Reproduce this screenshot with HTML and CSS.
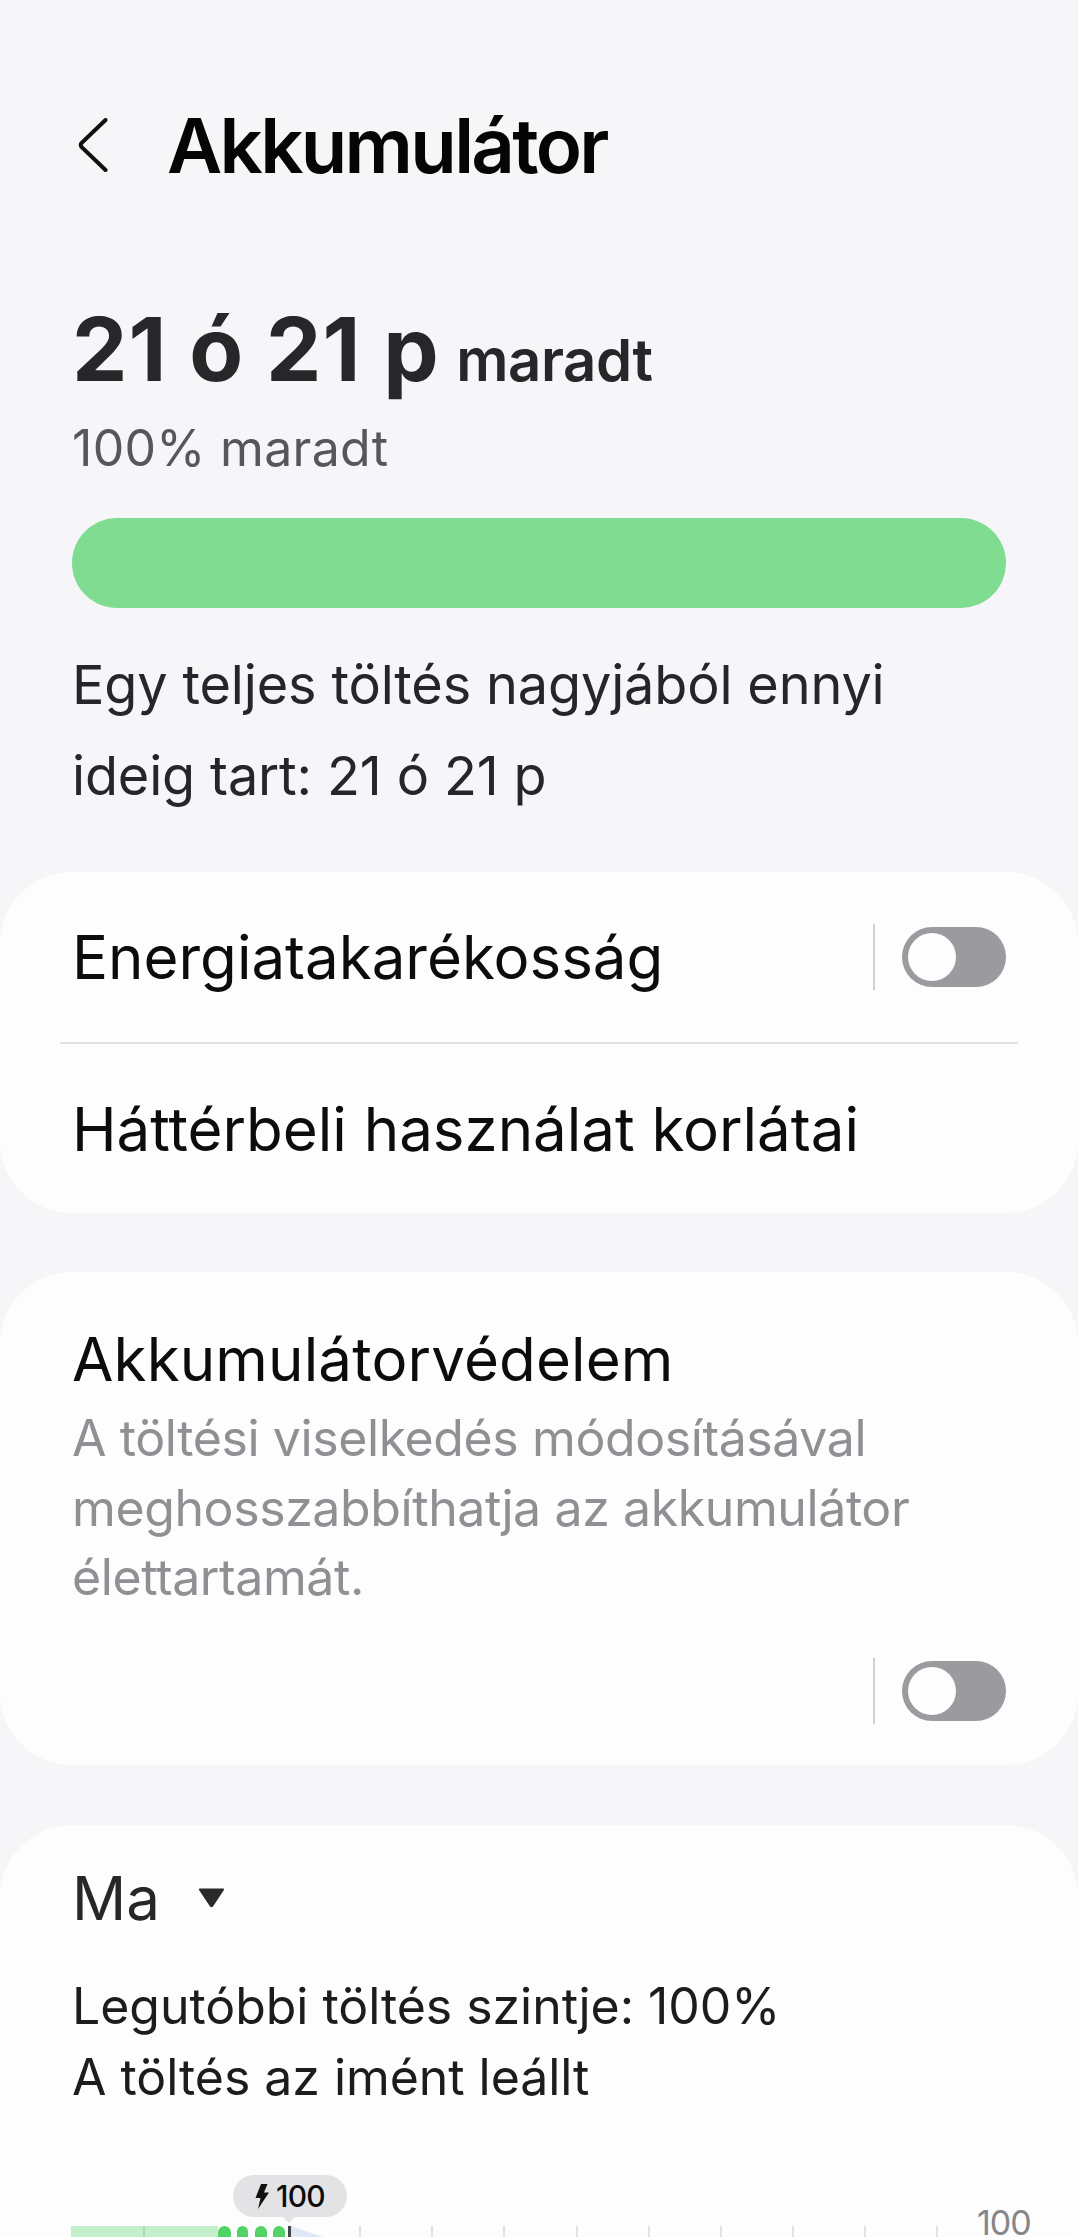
FILE: index.html
```html
<!DOCTYPE html>
<html lang="hu">
<head>
    <meta charset="UTF-8">
    <meta name="viewport" content="width=device-width, initial-scale=1.0">
    <title>Akkumulátor</title>
    <link rel="stylesheet" href="styles.css">
</head>
<body>

    <div class="page">
        <div class="header">
            <svg class="back-icon" width="30" height="54" viewBox="0 0 30 54">
                <path d="M27.5 2 L3.5 25 Q2 27 3.5 29 L27.5 52" fill="none" stroke="#111" stroke-width="4" stroke-linecap="round"/>
            </svg>
            <h1>Akkumulátor</h1>
        </div>

        <div class="summary">
            <div class="time-left"><span class="time-big">21 ó 21 p</span> <span class="time-word">maradt</span></div>
            <div class="percent-left">100% maradt</div>
            <div class="level-bar"></div>
            <p class="full-charge">Egy teljes töltés nagyjából ennyi<br>ideig tart: 21 ó 21 p</p>
        </div>

        <div class="card card-settings">
            <div class="row row-switch">
                <span class="row-title">Energiatakarékosság</span>
                <div class="switch-wrap">
                    <div class="switch"><div class="thumb"></div></div>
                </div>
            </div>
            <div class="divider"></div>
            <div class="row">
                <span class="row-title">Háttérbeli használat korlátai</span>
            </div>
        </div>

        <div class="card card-protect">
            <div class="row-title">Akkumulátorvédelem</div>
            <div class="row-desc">A töltési viselkedés módosításával meghosszabbíthatja az akkumulátor élettartamát.</div>
            <div class="switch-line">
                <div class="switch-wrap">
                    <div class="switch"><div class="thumb"></div></div>
                </div>
            </div>
        </div>

        <div class="card card-usage">
            <div class="period">
                <span>Ma</span>
                <svg width="27" height="20" viewBox="0 0 27 20">
                    <path d="M2 0.5 H25 Q27 0.5 25.6 2.6 L15 18.5 Q13.5 20 12 18.5 L1.4 2.6 Q0 0.5 2 0.5 Z" fill="#2a2a2d"/>
                </svg>
            </div>
            <p class="last-charge">Legutóbbi töltés szintje: 100%<br>A töltés az imént leállt</p>

            <div class="chart">
                <div class="charge-pill">
                    <svg width="14" height="25" viewBox="0 0 14 25">
                        <path d="M6 0 H12.5 L9 8.5 H14 L3 25 L5.5 14 H0.5 Z" fill="#111"/>
                    </svg>
                    <span>100</span>
                </div>
                <svg class="chart-bars" width="1078" height="12" viewBox="0 0 1078 12">
                    <rect x="71" y="0" width="147" height="12" fill="#c3efca"/>
                    <rect x="143" y="0" width="2" height="12" fill="#b0d8b8"/>
                    <rect x="218" y="0" width="13" height="16" rx="6.5" fill="#52d365"/>
                    <rect x="237" y="0" width="11" height="16" rx="5.5" fill="#52d365"/>
                    <rect x="255" y="0" width="12" height="16" rx="6" fill="#52d365"/>
                    <rect x="273" y="0" width="12" height="16" rx="6" fill="#52d365"/>
                    <polygon points="291,0 326,12 291,12" fill="#dfe8f6"/>
                    <rect x="288" y="0" width="3" height="12" fill="#45454a"/>
                    <rect x="359" y="0" width="2" height="12" fill="#e2e2e4"/>
                    <rect x="431" y="0" width="2" height="12" fill="#e2e2e4"/>
                    <rect x="503" y="0" width="2" height="12" fill="#e2e2e4"/>
                    <rect x="576" y="0" width="2" height="12" fill="#e2e2e4"/>
                    <rect x="648" y="0" width="2" height="12" fill="#e2e2e4"/>
                    <rect x="720" y="0" width="2" height="12" fill="#e2e2e4"/>
                    <rect x="792" y="0" width="2" height="12" fill="#e2e2e4"/>
                    <rect x="864" y="0" width="2" height="12" fill="#e2e2e4"/>
                    <rect x="936" y="0" width="2" height="12" fill="#e2e2e4"/>
                </svg>
                <span class="axis-label">100</span>
            </div>
        </div>
    </div>

</body>
</html>
```

FILE: styles.css
```css
* {
    margin: 0;
    padding: 0;
    box-sizing: border-box;
}

body {
    font-family: Inter, "Noto Sans", sans-serif;
    background-color: #f6f6f8;
    color: #0c0c0e;
}

.page {
    width: 1078px;
    height: 2237px;
    overflow: hidden;
}

/* Cabecalho */
.header {
    display: flex;
    align-items: center;
    gap: 59px;
    height: 90px;
    margin-top: 100px;
    padding-left: 78px;
}

h1 {
    font-size: 76px;
    font-weight: 600;
    letter-spacing: -2.7px;
    line-height: 90px;
    color: #050505;
}

/* Resumo da bateria */
.summary {
    padding: 0 72px;
    margin-top: 109px;
}

.time-left {
    height: 100px;
    line-height: 100px;
    color: #27272a;
    white-space: nowrap;
}

.time-big {
    font-size: 88px;
    font-weight: 700;
    letter-spacing: 1px;
}

.time-word {
    font-size: 58px;
    font-weight: 600;
    letter-spacing: -0.4px;
    margin-left: 12px;
}

.percent-left {
    font-size: 50px;
    line-height: 64px;
    margin-top: 17px;
    color: #56565b;
    letter-spacing: 0.3px;
}

.level-bar {
    height: 90px;
    margin-top: 38px;
    border-radius: 45px;
    background-color: #80dc90;
}

.full-charge {
    margin-top: 31px;
    font-size: 54px;
    line-height: 91px;
    color: #26262a;
    letter-spacing: -0.15px;
}

/* Cartoes */
.card {
    background-color: #fdfdfe;
    border-radius: 72px;
}

.card-settings {
    margin-top: 51px;
    height: 341px;
    padding: 0 60px;
}

.row {
    height: 170px;
    display: flex;
    align-items: center;
    padding-left: 12px;
}

.row-switch {
    justify-content: space-between;
    padding-right: 12px;
}

.row-title {
    font-size: 60px;
    color: #0c0c0e;
}

.divider {
    height: 2px;
    background-color: #e2e2e4;
}

.switch-wrap {
    display: flex;
    align-items: center;
    height: 66px;
    border-left: 2px solid #cfcfd2;
    padding-left: 27px;
}

.switch {
    width: 104px;
    height: 60px;
    border-radius: 30px;
    padding: 6px;
    background-color: #9a9a9f;
}

.thumb {
    width: 48px;
    height: 48px;
    border-radius: 50%;
    background-color: #fdfdfe;
}

.card-protect {
    margin-top: 59px;
    height: 493px;
    padding: 47px 72px 0;
}

.card-protect .row-title {
    line-height: 80px;
    letter-spacing: 0.15px;
}

.row-desc {
    font-size: 50px;
    line-height: 69.5px;
    color: #8f8f94;
    letter-spacing: -0.4px;
    margin-top: 5px;
}

.switch-line {
    display: flex;
    justify-content: flex-end;
    margin-top: 45px;
}

.card-usage {
    margin-top: 60px;
    height: 500px;
    padding-top: 33px;
}

.period {
    display: flex;
    align-items: center;
    gap: 38px;
    padding-left: 72px;
    font-size: 60px;
    line-height: 80px;
    color: #27272a;
}

.last-charge {
    margin-top: 33px;
    padding-left: 72px;
    font-size: 50px;
    line-height: 70.5px;
    color: #1c1c1f;
    letter-spacing: -0.05px;
}

/* Grafico */
.chart {
    position: relative;
    margin-top: 114px;
}

.chart-bars {
    display: block;
}

.charge-pill {
    position: absolute;
    left: 233px;
    top: -51px;
    width: 114px;
    height: 42px;
    border-radius: 21px;
    background-color: #e3e3e5;
    display: flex;
    align-items: center;
    justify-content: center;
    gap: 7px;
    font-size: 30px;
    font-weight: 500;
    color: #0c0c0e;
    letter-spacing: -0.8px;
}

.charge-pill::after {
    content: "";
    position: absolute;
    left: 49px;
    bottom: -6px;
    border-left: 7px solid transparent;
    border-right: 7px solid transparent;
    border-top: 7px solid #e3e3e5;
}

.axis-label {
    position: absolute;
    left: 977px;
    top: -18px;
    font-size: 34px;
    line-height: 30px;
    color: #86868a;
    letter-spacing: -1px;
}
```
